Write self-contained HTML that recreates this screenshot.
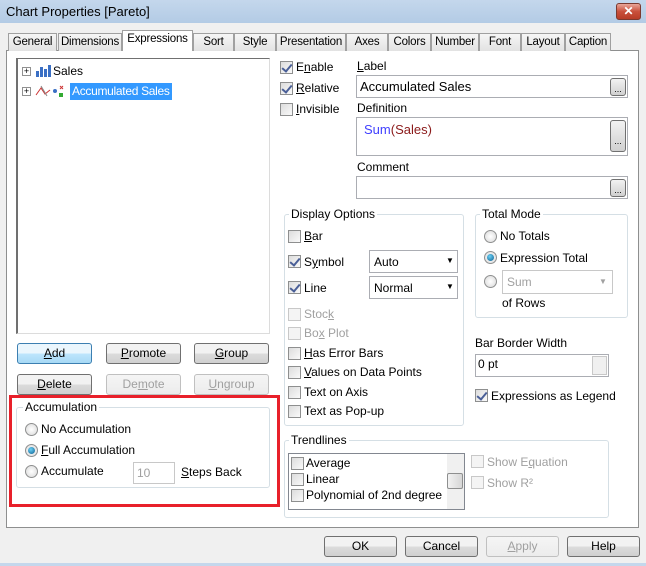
<!DOCTYPE html><html><head><style>
*{box-sizing:border-box}
body{margin:0;width:646px;height:566px;background:#f0f0f0;font-family:"Liberation Sans",sans-serif;font-size:12px;color:#000;position:relative;overflow:hidden;white-space:nowrap}
.a{position:absolute}
.title{left:0;top:0;width:646px;height:23px;background:linear-gradient(#c4d7ec,#b3cbe5);}
.tab{position:absolute;top:33px;height:18px;border:1px solid #a0a0a0;border-bottom:none;background:linear-gradient(#f6f6f6,#e2e2e2);text-align:center;line-height:16px;font-size:11.5px;letter-spacing:-0.2px;overflow:hidden}
.panel{left:6px;top:50px;width:633px;height:478px;background:#fff;border:1px solid #8e8f8f}
.btn{position:absolute;height:21px;border:1px solid #707070;border-radius:3px;background:linear-gradient(#f2f2f2 50%,#dcdcdc 50%,#d0d0d0);text-align:center;line-height:19px}
.dis{color:#a0a0a0;border-color:#c0c0c0;background:linear-gradient(#f5f5f5,#ececec)}
.cb{position:absolute;width:13px;height:13px;border:1px solid #8e8f8f;background:linear-gradient(135deg,#dcdcdc,#fafafa)}
.cb.d{border-color:#c8c8c8;background:#f4f4f4}
.ck:after{content:"";position:absolute;left:3px;top:0px;width:4px;height:8px;border:solid #4a5f97;border-width:0 2px 2px 0;transform:rotate(40deg)}
.rb{position:absolute;width:13px;height:13px;border-radius:50%;border:1px solid #8e8f8f;background:radial-gradient(#fff,#d8d8d8)}
.rb.on:after{content:"";position:absolute;left:2px;top:2px;width:7px;height:7px;border-radius:50%;background:radial-gradient(circle at 40% 35%,#6ad0f5,#0d5e8f)}
.grp{position:absolute;border:1px solid #d5dfe5;border-radius:3px}
.gl{position:absolute;background:#fff;padding:0 2px;top:-8px;left:4px}
.inp{position:absolute;border:1px solid #abadb3;background:#fff}
.dots{position:absolute;width:16px;height:18px;border:1px solid #707070;border-radius:3px;background:linear-gradient(#f2f2f2,#d0d0d0);font-size:9px;text-align:center;line-height:20px}
.g{color:#a0a0a0}
u{text-decoration:underline}
</style></head><body>
<div class="a title"></div>
<div class="a" style="left:6px;top:4px;font-size:13px">Chart Properties [Pareto]</div>
<div class="a" style="left:616px;top:3px;width:25px;height:17px;border:1px solid #7a3a30;border-radius:3px;background:linear-gradient(#e9a699,#c9503c 50%,#b73c26);color:#fff;font-weight:bold;text-align:center;line-height:15px;font-size:12px">✕</div>

<div class="a panel"></div>
<div class="tab" style="left:8px;width:49px">General</div>
<div class="tab" style="left:58px;width:64px">Dimensions</div>
<div class="tab" style="left:122px;top:30px;height:21px;width:71px;background:#fff;z-index:2">Expressions</div>
<div class="tab" style="left:193px;width:41px">Sort</div>
<div class="tab" style="left:234px;width:42px">Style</div>
<div class="tab" style="left:276px;width:70px">Presentation</div>
<div class="tab" style="left:346px;width:42px">Axes</div>
<div class="tab" style="left:388px;width:43px">Colors</div>
<div class="tab" style="left:431px;width:48px">Number</div>
<div class="tab" style="left:479px;width:42px">Font</div>
<div class="tab" style="left:521px;width:44px">Layout</div>
<div class="tab" style="left:565px;width:46px">Caption</div>

<div class="a" style="left:16px;top:58px;width:254px;height:276px;border:1px solid #dcdcdc;border-left:2px solid #707070;border-top:1px solid #707070;background:#fff"></div>
<div class="a" style="left:22px;top:67px;width:9px;height:9px;border:1px solid #919191;font-size:9px;line-height:6px;text-align:center">+</div>
<div class="a" style="left:22px;top:87px;width:9px;height:9px;border:1px solid #919191;font-size:9px;line-height:6px;text-align:center">+</div>
<svg class="a" style="left:35px;top:64px" width="16" height="14"><rect x="1" y="7" width="3" height="6" fill="#3a6fc4"/><rect x="5" y="3" width="3" height="10" fill="#3a6fc4"/><rect x="9" y="5" width="3" height="8" fill="#3a6fc4"/><rect x="13" y="1" width="3" height="12" fill="#3a6fc4"/></svg>
<div class="a" style="left:53px;top:64px">Sales</div>
<svg class="a" style="left:35px;top:84px" width="34" height="14"><path d="M1 11 L6 4 L10 10 L15 6" stroke="#c33" fill="none"/><path d="M6 2 L12 12" stroke="#888"/><circle cx="20" cy="7" r="2" fill="#3a6fc4"/><path d="M25 2l3 3M28 2l-3 3" stroke="#c33"/><rect x="24" y="9" width="4" height="4" fill="#3a3"/></svg>
<div class="a" style="left:70px;top:83px;height:17px;background:#3399ff;color:#fff;padding:0 2px;line-height:16px;letter-spacing:-0.3px">Accumulated Sales</div>

<div class="btn" style="left:17px;top:343px;width:75px;border-color:#3c7fb1;background:linear-gradient(#eaf6fd 50%,#bee6fd 50%,#a7d9f5)"><u>A</u>dd</div>
<div class="btn" style="left:106px;top:343px;width:75px"><u>P</u>romote</div>
<div class="btn" style="left:194px;top:343px;width:75px"><u>G</u>roup</div>
<div class="btn" style="left:17px;top:374px;width:75px"><u>D</u>elete</div>
<div class="btn dis" style="left:106px;top:374px;width:75px">De<u>m</u>ote</div>
<div class="btn dis" style="left:194px;top:374px;width:75px"><u>U</u>ngroup</div>

<div class="a" style="left:9px;top:395px;width:271px;height:112px;border:3px solid #e8202a"></div>
<div class="grp" style="left:16px;top:407px;width:254px;height:81px"><span class="gl" style="left:6px">Accumulation</span></div>
<div class="rb" style="left:25px;top:423px"></div><div class="a" style="left:41px;top:422px">No Accumulation</div>
<div class="rb on" style="left:25px;top:444px"></div><div class="a" style="left:41px;top:443px"><u>F</u>ull Accumulation</div>
<div class="rb" style="left:25px;top:465px"></div><div class="a" style="left:41px;top:464px">Accumulate</div>
<div class="inp" style="left:133px;top:462px;width:42px;height:22px;border-color:#c8c8c8"></div>
<div class="a g" style="left:137px;top:466px">10</div>
<div class="a" style="left:181px;top:465px"><u>S</u>teps Back</div>

<div class="cb ck" style="left:280px;top:61px"></div><div class="a" style="left:296px;top:60px">E<u>n</u>able</div>
<div class="cb ck" style="left:280px;top:82px"></div><div class="a" style="left:296px;top:81px"><u>R</u>elative</div>
<div class="cb" style="left:280px;top:103px"></div><div class="a" style="left:296px;top:102px"><u>I</u>nvisible</div>
<div class="a" style="left:357px;top:59px"><u>L</u>abel</div>
<div class="inp" style="left:356px;top:75px;width:272px;height:23px"></div>
<div class="a" style="left:360px;top:79px;font-size:13px">Accumulated Sales</div>
<div class="dots" style="left:610px;top:78px">...</div>
<div class="a" style="left:357px;top:101px">Definition</div>
<div class="inp" style="left:356px;top:117px;width:272px;height:39px"></div>
<div class="a" style="left:364px;top:122px;font-size:13px"><span style="color:#4040ff">Sum</span><span style="color:#8b1a1a">(Sales)</span></div>
<div class="dots" style="left:610px;top:120px;height:32px;line-height:40px">...</div>
<div class="a" style="left:357px;top:160px">Comment</div>
<div class="inp" style="left:356px;top:176px;width:272px;height:23px"></div>
<div class="dots" style="left:610px;top:179px">...</div>

<div class="grp" style="left:284px;top:214px;width:180px;height:212px"><span class="gl">Display Options</span></div>
<div class="cb" style="left:288px;top:230px"></div><div class="a" style="left:304px;top:229px"><u>B</u>ar</div>
<div class="cb ck" style="left:288px;top:255px"></div><div class="a" style="left:304px;top:255px">S<u>y</u>mbol</div>
<div class="inp" style="left:369px;top:250px;width:89px;height:23px"></div><div class="a" style="left:374px;top:255px">Auto</div><div class="a" style="left:446px;top:256px;font-size:8px">▼</div>
<div class="cb ck" style="left:288px;top:281px"></div><div class="a" style="left:304px;top:281px">Line</div>
<div class="inp" style="left:369px;top:276px;width:89px;height:23px"></div><div class="a" style="left:374px;top:281px">Normal</div><div class="a" style="left:446px;top:282px;font-size:8px">▼</div>
<div class="cb d" style="left:288px;top:308px"></div><div class="a g" style="left:304px;top:307px">Stoc<u>k</u></div>
<div class="cb d" style="left:288px;top:327px"></div><div class="a g" style="left:304px;top:326px">Bo<u>x</u> Plot</div>
<div class="cb" style="left:288px;top:347px"></div><div class="a" style="left:304px;top:346px"><u>H</u>as Error Bars</div>
<div class="cb" style="left:288px;top:366px"></div><div class="a" style="left:304px;top:365px"><u>V</u>alues on Data Points</div>
<div class="cb" style="left:288px;top:386px"></div><div class="a" style="left:304px;top:385px">Text on Axis</div>
<div class="cb" style="left:288px;top:405px"></div><div class="a" style="left:304px;top:404px">Text as Pop-up</div>

<div class="grp" style="left:475px;top:214px;width:153px;height:104px"><span class="gl">Total Mode</span></div>
<div class="rb" style="left:484px;top:230px"></div><div class="a" style="left:500px;top:229px">No Totals</div>
<div class="rb on" style="left:484px;top:251px"></div><div class="a" style="left:500px;top:251px">Expression Total</div>
<div class="rb" style="left:484px;top:275px"></div>
<div class="inp" style="left:502px;top:270px;width:111px;height:24px;border-color:#c8c8c8"></div><div class="a g" style="left:507px;top:275px">Sum</div><div class="a g" style="left:599px;top:277px;font-size:8px">▼</div>
<div class="a" style="left:502px;top:296px">of Rows</div>
<div class="a" style="left:475px;top:336px">Bar Border Width</div>
<div class="inp" style="left:475px;top:354px;width:134px;height:23px"></div><div class="a" style="left:478px;top:357px">0 pt</div>
<div class="a" style="left:592px;top:356px;width:15px;height:19px;border:1px solid #c8c8c8;background:#f0f0f0"></div>
<div class="cb ck" style="left:475px;top:389px"></div><div class="a" style="left:491px;top:389px">Expressions as Legend</div>

<div class="grp" style="left:284px;top:440px;width:325px;height:78px"><span class="gl">Trendlines</span></div>
<div class="inp" style="left:288px;top:453px;width:177px;height:57px;border-color:#828790;overflow:hidden"></div>
<div class="cb" style="left:291px;top:457px"></div><div class="a" style="left:306px;top:456px">Average</div>
<div class="cb" style="left:291px;top:473px"></div><div class="a" style="left:306px;top:472px">Linear</div>
<div class="cb" style="left:291px;top:489px"></div><div class="a" style="left:306px;top:488px">Polynomial of 2nd degree</div>
<div class="a" style="left:447px;top:454px;width:17px;height:55px;background:#f0f0f0"></div>
<div class="a" style="left:447px;top:473px;width:16px;height:16px;border:1px solid #8e8f8f;border-radius:2px;background:linear-gradient(90deg,#f2f2f2,#d6d6d6)"></div>
<div class="cb d" style="left:471px;top:455px"></div><div class="a g" style="left:487px;top:455px">Show E<u>q</u>uation</div>
<div class="cb d" style="left:471px;top:476px"></div><div class="a g" style="left:487px;top:476px">Show R²</div>

<div class="btn" style="left:324px;top:536px;width:73px">OK</div>
<div class="btn" style="left:405px;top:536px;width:73px">Cancel</div>
<div class="btn dis" style="left:486px;top:536px;width:73px"><u>A</u>pply</div>
<div class="btn" style="left:567px;top:536px;width:73px">Help</div>
<div class="a" style="left:0;top:563px;width:646px;height:3px;background:#c4d7ec"></div>
</body></html>
